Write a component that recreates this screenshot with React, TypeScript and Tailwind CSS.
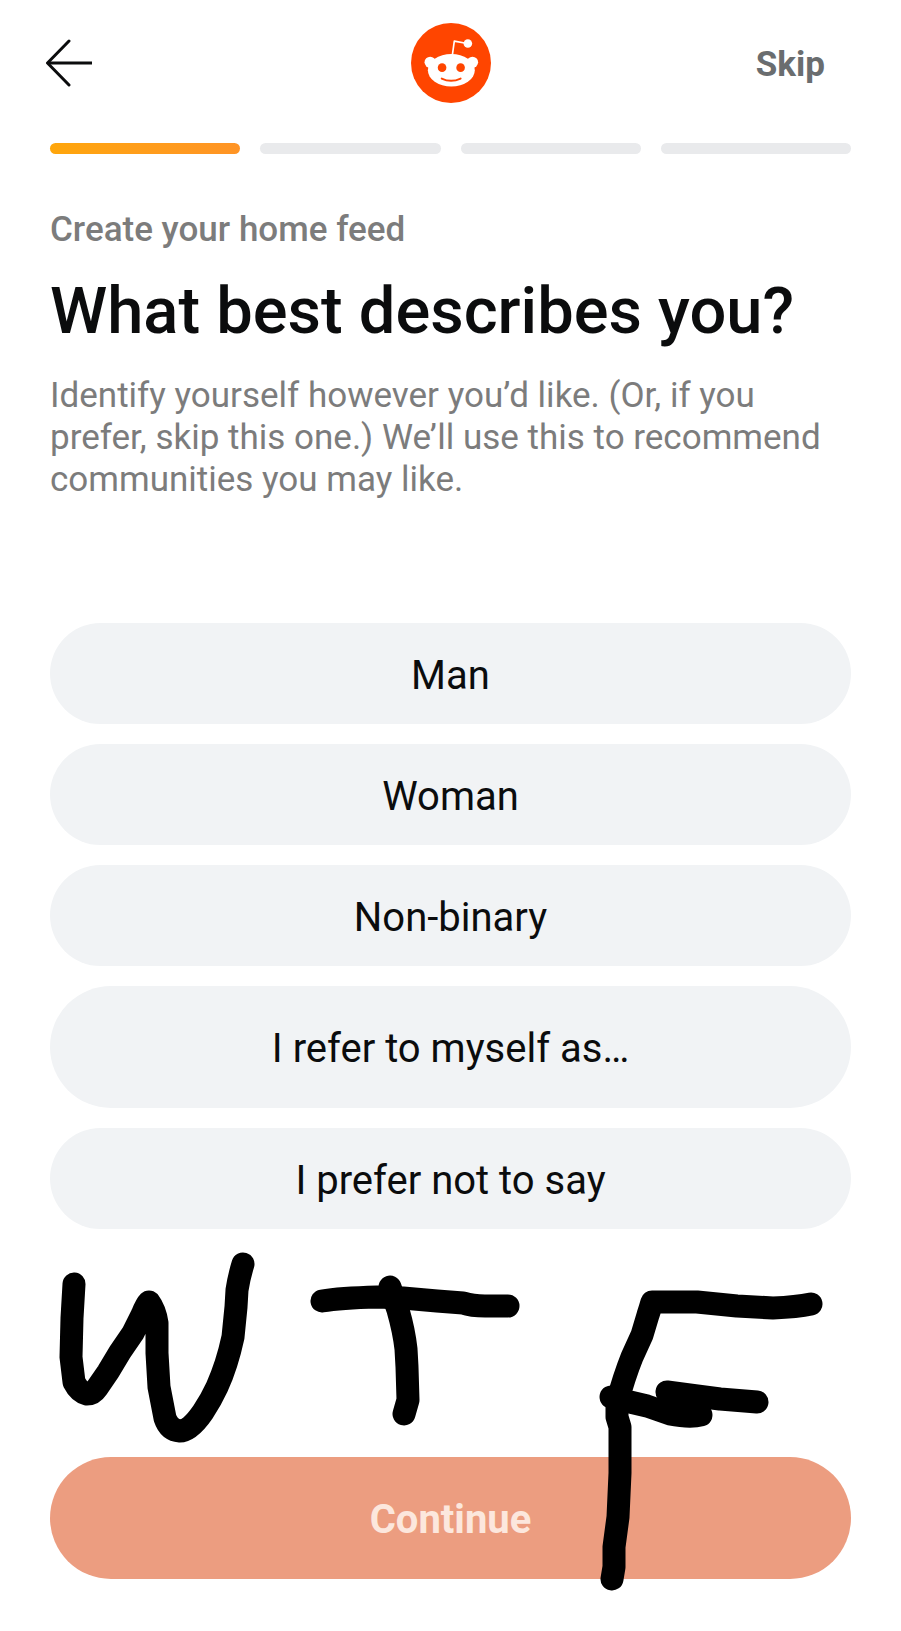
import React, { useState } from "react";
import clsx from "clsx";

const options = [
  { label: "Man" },
  { label: "Woman" },
  { label: "Non-binary" },
  { label: "I refer to myself as…", tall: true },
  { label: "I prefer not to say" },
];

const BackArrow = () => (
  <svg className="h-12 w-12" viewBox="0 0 48 48" fill="none" stroke="#0b0c0d" strokeWidth="3" aria-hidden="true">
    <path d="M48 24H4" />
    <path d="M25 2 3.5 24 25 46" strokeLinecap="round" strokeLinejoin="round" />
  </svg>
);

const RedditLogo = () => (
  <svg className="h-20 w-20" viewBox="30 36 242 242" role="img" aria-label="Reddit">
    <circle cx="151" cy="157" r="121" fill="#ff4500" />
    <path d="M155 134 161 91 200 98" fill="none" stroke="#fff" strokeWidth="5" strokeLinejoin="round" />
    <circle cx="202" cy="98" r="13" fill="#fff" />
    <circle cx="88" cy="155" r="17" fill="#fff" />
    <circle cx="216" cy="155" r="17" fill="#fff" />
    <ellipse cx="152" cy="179" rx="71" ry="49" fill="#fff" />
    <circle cx="124" cy="171" r="13" fill="#ff4500" />
    <circle cx="180" cy="171" r="13" fill="#ff4500" />
    <path d="M123 204Q151 218 180 204" fill="none" stroke="#ff4500" strokeWidth="6" strokeLinecap="round" />
  </svg>
);

// Freehand marker strokes drawn over the footer
const Doodle = () => (
  <svg
    className="pointer-events-none absolute left-0 top-0 w-full"
    viewBox="0 0 901 402"
    fill="none"
    stroke="#000"
    strokeWidth="23"
    strokeLinecap="round"
    strokeLinejoin="round"
    aria-hidden="true"
  >
    <path d="M74 55 72 89 71 128 74 153Q79 163 87 165 93 165 97 159L108 143 120 123 133 104 142 86Q146 76 149 73 155 81 157 94L157 124 159 158 165 189Q169 201 180 202 190 202 203 183 211 171 217 158 227 136 233 108L236 78 237 61Q239 48 243 35" />
    <path d="M322 72Q340 69 377 68L403 69 437 72 463 74Q472 77 485 77L508 77" />
    <path d="M390 58 398 81Q404 102 406 120L407 138 408 171 404 185" />
    <path d="M811 75Q797 78 773 79L737 77 697 73 652 73Q650 80 648 86L642 106 632 128Q624 148 617 174L617 188 620 198 620 244 618 288 614 318 614 338 612 350" />
    <path d="M611 168 630 173 647 177 670 185Q690 189 701 186" />
    <path d="M667 163 697 167 720 170 757 173" />
  </svg>
);

const App = () => {
  const [selected, setSelected] = useState<string | null>(null);

  return (
    <div className="min-h-screen bg-white font-[Roboto,sans-serif] text-[#0b0c0d]">
      {/* Header */}
      <header className="grid grid-cols-3 items-center px-11 pt-[23px]">
        <button aria-label="Back" className="justify-self-start">
          <BackArrow />
        </button>
        <div className="justify-self-center">
          <RedditLogo />
        </div>
        <button className="justify-self-end px-8 pt-1 text-[35px] leading-10 font-bold text-[#6a6d6f]">Skip</button>
      </header>

      {/* Progress */}
      <div className="mt-10 flex gap-5 px-[50px]">
        <div className="h-[11px] flex-[19] rounded-full bg-linear-to-r from-[#ffa60a] to-[#ff9425]" />
        <div className="h-[11px] flex-[18] rounded-full bg-[#e9eaec]" />
        <div className="h-[11px] flex-[18] rounded-full bg-[#e9eaec]" />
        <div className="h-[11px] flex-[19] rounded-full bg-[#e9eaec]" />
      </div>

      <main className="px-[50px] pt-[55px]">
        <p className="text-[35px] leading-[42px] font-medium text-[#7c7c7c]">Create your home feed</p>
        <h1 className="mt-5 text-[65px] leading-[80px] font-medium">What best describes you?</h1>
        <p className="mt-6 text-[35px] leading-[42px] text-[#7c7c7c]">
          Identify yourself however you’d like. (Or, if you prefer, skip this one.) We’ll use this to recommend
          communities you may like.
        </p>

        {/* Options */}
        <div className="mt-[122px] flex flex-col gap-5">
          {options.map(({ label, tall }) => (
            <button
              key={label}
              onClick={() => setSelected(label)}
              aria-pressed={selected === label}
              className={clsx("w-full rounded-full bg-[#f1f3f5] pt-1 text-[40px]", tall ? "h-[122px]" : "h-[101px]")}
            >
              {label}
            </button>
          ))}
        </div>
      </main>

      {/* Footer */}
      <footer className="relative px-[50px] pt-[228px] pb-[52px]">
        <button className="h-[122px] w-full rounded-full bg-[#ec9d80] pt-1 text-[40px] font-bold text-[#fce7dd]">
          Continue
        </button>
        <Doodle />
      </footer>
    </div>
  );
};

export default App;
